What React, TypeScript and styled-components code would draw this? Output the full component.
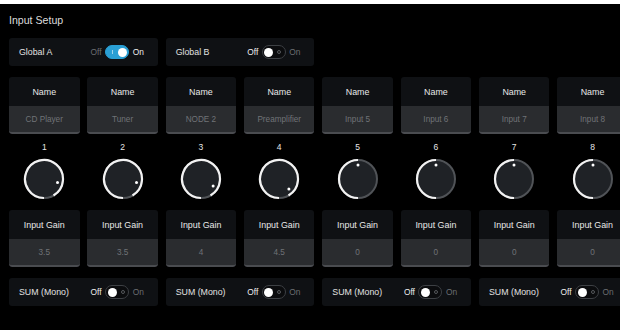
import React from "react";
import styled, { createGlobalStyle } from "styled-components";

const GlobalStyle = createGlobalStyle`
  html, body {
    margin: 0;
    padding: 0;
    background: #000;
    overflow: hidden;
  }
  body {
    font-family: "Liberation Sans", Arial, sans-serif;
    color: #e6e6e6;
  }
`;

const Page = styled.div`
  width: 620px;
  height: 330px;
  background: #000;
  overflow: hidden;
  border-top: 4px solid #fff;
  box-sizing: border-box;
`;

const Title = styled.div`
  padding: 10px 0 0 9px;
  height: 34px;
  box-sizing: border-box;
  font-size: 10.6px;
  line-height: 12px;
  color: #dcdcdc;
`;

const Grid = styled.div`
  display: grid;
  grid-template-columns: repeat(8, 70.5px);
  column-gap: 7.83px;
  row-gap: 11px;
  padding-left: 9px;
  width: 700px;
`;

const RowFill = styled.div<{ $span: number }>`
  grid-column: span ${(p) => p.$span};
`;

const ToggleCard = styled.div`
  grid-column: span 2;
  height: 28px;
  background: #0f1114;
  border-radius: 3px;
  display: flex;
  align-items: center;
  justify-content: space-between;
  padding: 0 14px 0 10px;
  box-sizing: border-box;
  font-size: 8.8px;
  color: #e2e2e2;
`;

const SwitchGroup = styled.div`
  display: flex;
  align-items: center;
  gap: 3.5px;
  font-size: 8.4px;
`;

const SwitchLabel = styled.span<{ $active: boolean }>`
  color: ${(p) => (p.$active ? "#ededed" : "#6b6e72")};
`;

const Pill = styled.div<{ $on: boolean }>`
  position: relative;
  width: 24px;
  height: 14px;
  border-radius: 7px;
  box-sizing: border-box;
  background: ${(p) => (p.$on ? "#2a9fd4" : "#0b0c0e")};
  border: 1px solid ${(p) => (p.$on ? "#2a9fd4" : "#3d4044")};
`;

const Thumb = styled.div<{ $on: boolean }>`
  position: absolute;
  top: 1.5px;
  left: ${(p) => (p.$on ? "11.5px" : "1.5px")};
  width: 9px;
  height: 9px;
  border-radius: 50%;
  background: #fff;
`;

const OnMark = styled.div`
  position: absolute;
  left: 5.5px;
  top: 4px;
  width: 1px;
  height: 4px;
  background: rgba(255, 255, 255, 0.55);
`;

const OffMark = styled.div`
  position: absolute;
  right: 3.5px;
  top: 4px;
  width: 4px;
  height: 4px;
  border-radius: 50%;
  box-sizing: border-box;
  border: 1px solid #55585c;
`;

const Strip = styled.div`
  display: flex;
  flex-direction: column;
  align-items: stretch;
`;

const FieldCard = styled.div`
  height: 57px;
  border-radius: 3px;
  background: #0f1114;
  display: flex;
  flex-direction: column;
  overflow: hidden;
`;

const FieldHeader = styled.div`
  height: 29px;
  display: flex;
  align-items: center;
  justify-content: center;
  font-size: 8.9px;
  color: #e8e8e8;
`;

const FieldValue = styled.div`
  flex: 1;
  background: #2a2c2f;
  border-bottom: 2px solid #4a4c50;
  border-radius: 0 0 3px 3px;
  display: flex;
  align-items: center;
  justify-content: center;
  font-size: 8.2px;
  color: #707377;
`;

const Number = styled.div`
  height: 24px;
  display: flex;
  align-items: center;
  justify-content: center;
  padding-top: 2px;
  box-sizing: border-box;
  font-size: 8.5px;
  color: #e6e6e6;
`;

const KnobWrap = styled.div`
  height: 52px;
  display: flex;
  justify-content: center;
  align-items: flex-start;
`;

type KnobProps = { value: number };

function polar(cx: number, cy: number, r: number, deg: number) {
  const a = ((deg - 90) * Math.PI) / 180;
  return [cx + r * Math.cos(a), cy + r * Math.sin(a)];
}

function Knob({ value }: KnobProps) {
  const cx = 21;
  const cy = 21;
  const r = 19;
  const angle = (value / 6) * 180; // 0 at top, clockwise
  const arcEnd = value > 0 ? Math.max(angle, 150) : angle;
  const startDeg = -180;
  const [sx, sy] = polar(cx, cy, r, startDeg);
  const [ex, ey] = polar(cx, cy, r, arcEnd);
  const sweep = arcEnd - startDeg;
  const large = sweep > 180 ? 1 : 0;
  const [dx, dy] = polar(cx, cy, 14, angle);
  return (
    <svg width="42" height="42" viewBox="0 0 42 42">
      <circle cx={cx} cy={cy} r={r} fill="#1f2226" stroke="#505357" strokeWidth="2" />
      <path
        d={`M ${sx} ${sy} A ${r} ${r} 0 ${large} 1 ${ex} ${ey}`}
        fill="none"
        stroke="#f2f2f2"
        strokeWidth="2.2"
      />
      <circle cx={dx} cy={dy} r="1.5" fill="#fff" />
    </svg>
  );
}

function Switch({ on }: { on: boolean }) {
  return (
    <SwitchGroup>
      <SwitchLabel $active={!on}>Off</SwitchLabel>
      <Pill $on={on}>
        {on ? <OnMark /> : <OffMark />}
        <Thumb $on={on} />
      </Pill>
      <SwitchLabel $active={on}>On</SwitchLabel>
    </SwitchGroup>
  );
}

const channels = [
  { name: "CD Player", gain: 3.5 },
  { name: "Tuner", gain: 3.5 },
  { name: "NODE 2", gain: 4 },
  { name: "Preamplifier", gain: 4.5 },
  { name: "Input 5", gain: 0 },
  { name: "Input 6", gain: 0 },
  { name: "Input 7", gain: 0 },
  { name: "Input 8", gain: 0 },
];

export default function App() {
  return (
    <>
      <GlobalStyle />
      <Page>
        <Title>Input Setup</Title>
        <Grid>
          <ToggleCard>
            <span>Global A</span>
            <Switch on={true} />
          </ToggleCard>
          <ToggleCard>
            <span>Global B</span>
            <Switch on={false} />
          </ToggleCard>
          <RowFill $span={4} />
          {channels.map((c, i) => (
            <Strip key={i}>
              <FieldCard>
                <FieldHeader>Name</FieldHeader>
                <FieldValue>{c.name}</FieldValue>
              </FieldCard>
              <Number>{i + 1}</Number>
              <KnobWrap>
                <Knob value={c.gain} />
              </KnobWrap>
              <FieldCard>
                <FieldHeader>Input Gain</FieldHeader>
                <FieldValue>{String(c.gain)}</FieldValue>
              </FieldCard>
            </Strip>
          ))}
          {[0, 1, 2, 3].map((i) => (
            <ToggleCard key={i}>
              <span>SUM (Mono)</span>
              <Switch on={false} />
            </ToggleCard>
          ))}
        </Grid>
      </Page>
    </>
  );
}
